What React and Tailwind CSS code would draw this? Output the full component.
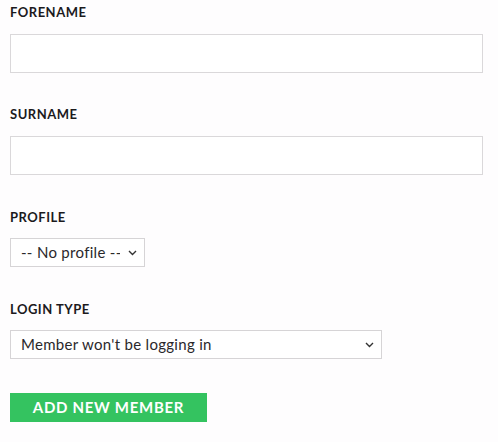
import { useState } from "react";

const Label = ({ children, className = "" }) => (
  <label className={`block text-[13px] leading-4 font-bold text-[#1c1a1d] tracking-[0.5px] ${className}`}>
    {children}
  </label>
);

const Chevron = () => (
  <svg
    className="pointer-events-none absolute right-[8px] top-1/2 -translate-y-1/2"
    width="9"
    height="6"
    viewBox="0 0 9 6"
    fill="none"
  >
    <path d="M1 1l3.5 3.5L8 1" stroke="#333" strokeWidth="1.4" />
  </svg>
);

const Select = ({ value, onChange, options, className = "" }) => (
  <div className={`relative ${className}`}>
    <select
      value={value}
      onChange={(e) => onChange(e.target.value)}
      className="w-full h-[29px] appearance-none bg-white border border-[#d6d4d6] pl-[10px] pr-6 text-[15px] tracking-[0.3px] text-[#2a282b] outline-none"
    >
      {options.map((o) => (
        <option key={o}>{o}</option>
      ))}
    </select>
    <Chevron />
  </div>
);

export default function App() {
  const [forename, setForename] = useState("");
  const [surname, setSurname] = useState("");
  const [profile, setProfile] = useState("-- No profile --");
  const [login, setLogin] = useState("Member won't be logging in");

  return (
    <div
      className="min-h-[442px] bg-[#fefdfe] px-[10px] pt-[4px]"
      style={{ fontFamily: "Lato, 'Noto Sans', sans-serif" }}
    >
      {/* Forename */}
      <Label>FORENAME</Label>
      <input
        value={forename}
        onChange={(e) => setForename(e.target.value)}
        className="mt-[14px] block w-[473px] h-[39px] bg-white border border-[#dad8da] px-3 text-[15px] outline-none"
      />

      {/* Surname */}
      <Label className="mt-[33px]">SURNAME</Label>
      <input
        value={surname}
        onChange={(e) => setSurname(e.target.value)}
        className="mt-[14px] block w-[473px] h-[39px] bg-white border border-[#dad8da] px-3 text-[15px] outline-none"
      />

      {/* Profile */}
      <Label className="mt-[34px]">PROFILE</Label>
      <Select
        className="mt-[13px] w-[135px]"
        value={profile}
        onChange={setProfile}
        options={["-- No profile --", "Coach", "Player", "Parent"]}
      />

      {/* Login type */}
      <Label className="mt-[34px]">LOGIN TYPE</Label>
      <Select
        className="mt-[13px] w-[372px]"
        value={login}
        onChange={setLogin}
        options={["Member won't be logging in", "Member will log in with email"]}
      />

      <button className="mt-[34px] w-[197px] h-[29px] bg-[#34c360] text-white text-[15px] font-bold tracking-[0.7px]">
        ADD NEW MEMBER
      </button>
    </div>
  );
}
